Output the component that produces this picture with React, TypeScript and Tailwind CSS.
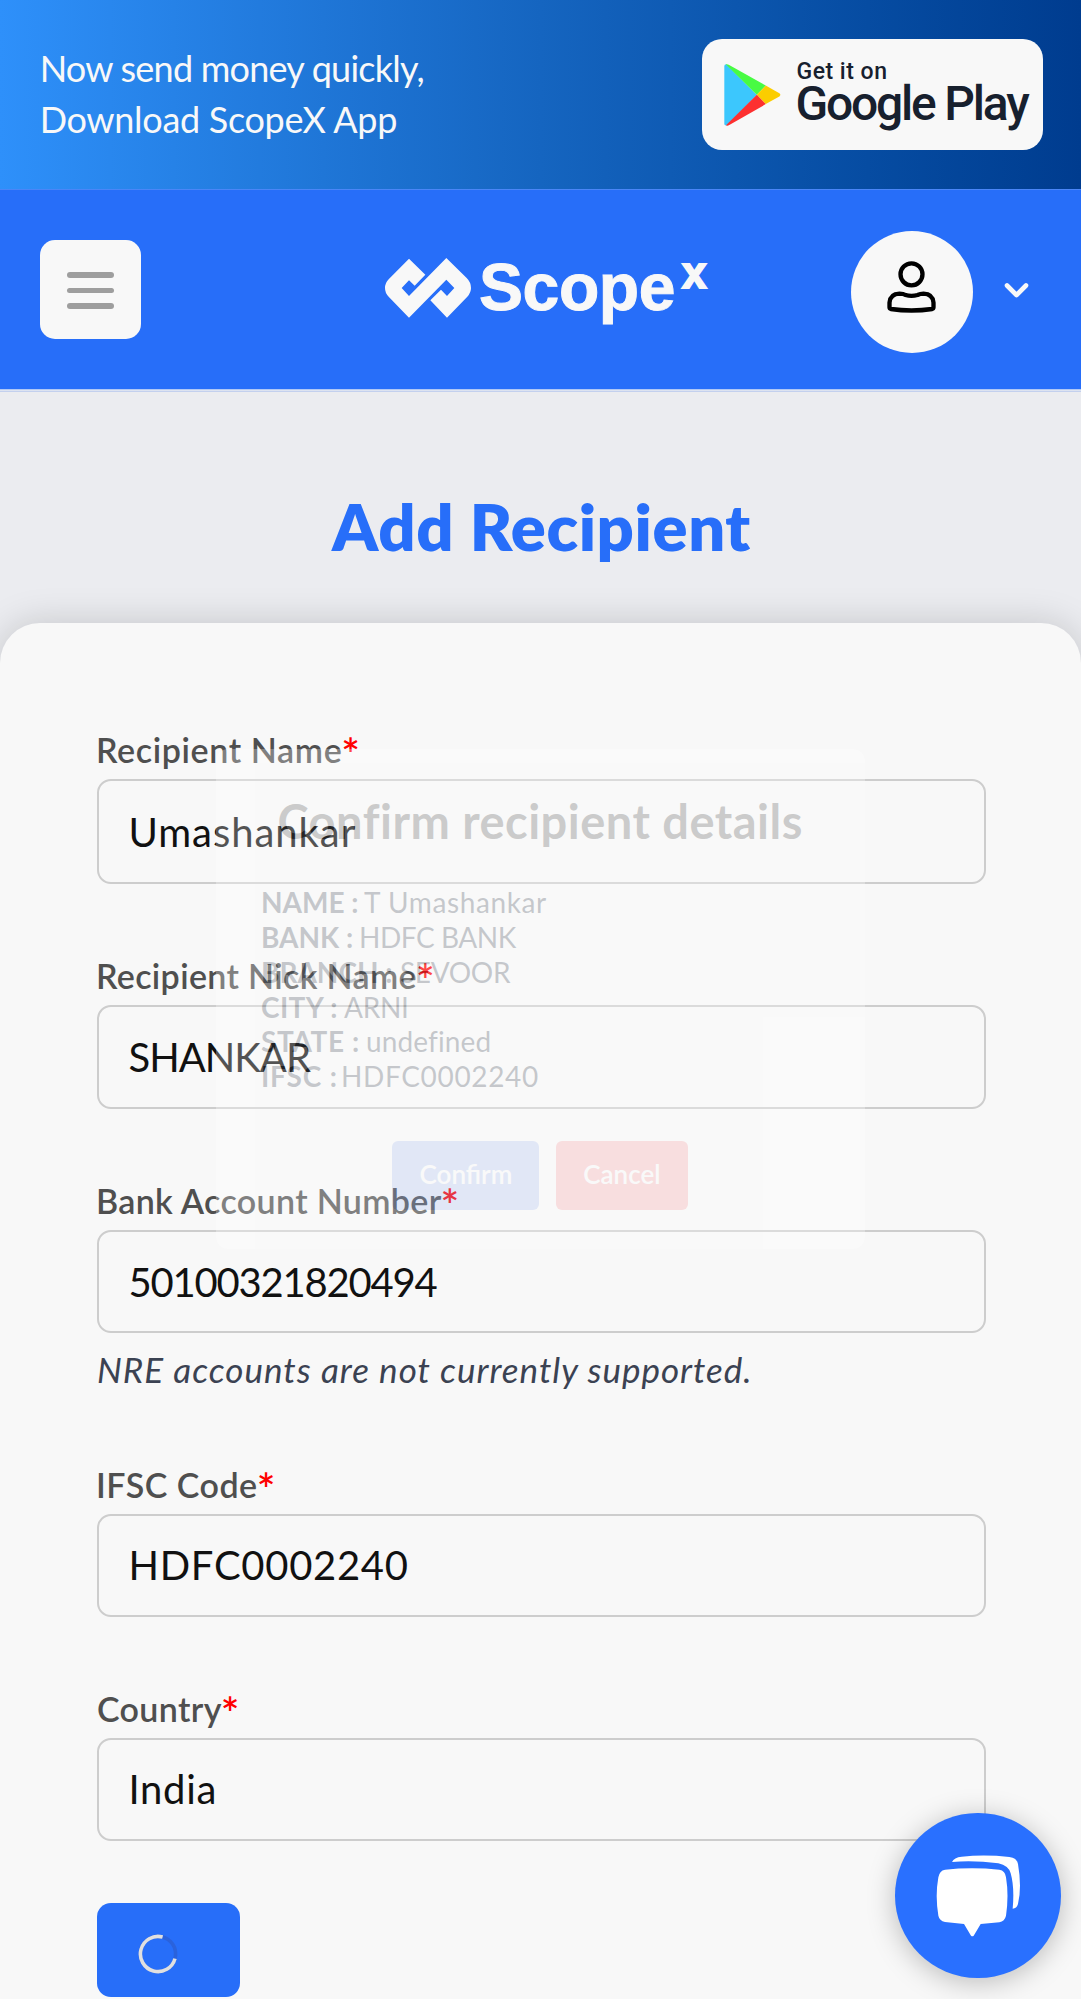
import type { ReactNode } from "react";

function PlayLogo() {
  return (
    <svg className="h-[62px] w-[57px] shrink-0" viewBox="131 130 170 187">
      <path d="M131 136 Q131 131 137 131 L229 223 L140 315 Q131 317 131 311 Z" fill="#3cc7fd" />
      <path d="M135 131 Q140 129 147 134 L256 195 L229 223 Z" fill="#48fb43" />
      <path d="M256 195 L297 218 Q303 223 297 228 L256 251 L229 223 Z" fill="#fbcd00" />
      <path d="M229 223 L256 251 L146 314 Q140 318 136 315 Z" fill="#fd3030" />
    </svg>
  );
}

function LogoMark() {
  return (
    <svg className="mt-[68px] h-[60px] w-[86px] shrink-0" viewBox="45 112 258 180" fill="#f8f8f8">
      <path d="M117 114 L166 162 L134 195 L117 179 L95 202 L117 226 L229 112 L290 172 Q303 185 303 202 Q303 216 292 228 L231 291 L181 239 L213 207 L231 226 L253 202 L229 177 L117 291 L56 228 Q45 217 45 202 Q45 187 56 176 Z" />
    </svg>
  );
}

function PersonIcon() {
  return (
    <svg className="mt-[29px] h-[55px] w-[51px]" viewBox="259.5 180 153 165" fill="none" stroke="#000" strokeWidth="13" strokeLinejoin="round">
      <circle cx="336" cy="223" r="33" />
      <path d="M270 322 V308 Q272 282 300 281 Q312 281 318 285 Q336 290 354 285 Q362 281 372 281 Q400 282 402 308 V322 Q402 326 398 327 Q336 336 274 327 Q270 326 270 322 Z" />
    </svg>
  );
}

function Spinner() {
  return (
    <svg className="h-10 w-10" viewBox="-20 -20 40 40" fill="none" strokeWidth="3.6">
      <circle r="17.6" stroke="#2a62dc" />
      <path d="M17 4.6 A17.6 17.6 0 1 1 4.6 -17" stroke="#e0e0e0" />
    </svg>
  );
}

function ChatIcon() {
  return (
    <svg className="h-[83.3px] w-[86.7px]" viewBox="225 220 260 250" fill="#fff">
      <path d="M255 267 Q336 258 418 267 Q436 270 438 290 Q447 345 438 405 Q434 422 418 425 L362 430 L341 465 Q337 469 333 465 L312 430 L255 424 Q238 420 235 405 Q225 345 235 290 Q238 270 255 267 Z" />
      <path d="M276 244 Q282 230 305 228 Q375 221 448 229 Q470 231 474 250 Q486 320 474 370 Q470 384 458 384 Q464 320 452 278 Q446 255 415 248 Q340 238 276 244 Z" />
    </svg>
  );
}

function Field({
  label,
  labelClass,
  value,
  inputClass,
  children,
}: {
  label: string;
  labelClass: string;
  value: string;
  inputClass: string;
  children?: ReactNode;
}) {
  return (
    <div>
      <label className={"block h-[51px] pl-px text-[34px] leading-[44px] font-semibold text-[#4f4f4f] " + labelClass}>
        {label}
        <span className="-ml-px align-[-8px] text-[44px] leading-[0] font-semibold tracking-normal text-[#ff0000]">*</span>
      </label>
      <div className={"flex items-center rounded-[14px] border-2 border-[#cdcdcd] pl-[29.5px] text-[40px] text-[#111] " + inputClass}>
        {value}
      </div>
      {children}
    </div>
  );
}

const details = [
  { label: "NAME :", labelClass: "w-[103px]", value: "T Umashankar", valueClass: "tracking-[0.6px]" },
  { label: "BANK :", labelClass: "w-[98px]", value: "HDFC BANK", valueClass: "tracking-[-0.45px]" },
  { label: "BRANCH :", labelClass: "w-[139px]", value: "SEVOOR", valueClass: "tracking-[-0.32px]" },
  { label: "CITY :", labelClass: "w-[83px] tracking-[0.39px]", value: "ARNI", valueClass: "tracking-[-0.29px]" },
  { label: "STATE :", labelClass: "w-[105px] tracking-[0.61px]", value: "undefined", valueClass: "tracking-[0.13px]" },
  { label: "IFSC :", labelClass: "w-[80px] tracking-[0.82px]", value: "HDFC0002240", valueClass: "tracking-[0.65px]" },
];

function ConfirmDialog() {
  return (
    <div className="absolute top-[748.6px] left-[215.7px] h-[500.7px] w-[649px] rounded-[12px] bg-white opacity-[0.28]">
      <h2 className="mt-[44.5px] text-center text-[47px] leading-[56px] font-bold tracking-[0.48px] text-[#595959]">
        Confirm recipient details
      </h2>
      <div className="mt-[36.4px] pl-[45.3px] text-[28px] leading-[34.67px] text-[#434d5b]">
        {details.map((d) => (
          <div key={d.label} className="flex whitespace-nowrap">
            <span className={"font-bold " + d.labelClass}>{d.label}</span>
            <span className={d.valueClass}>{d.value}</span>
          </div>
        ))}
      </div>
      <div className="mt-[47.4px] flex justify-center gap-[16.5px] text-[26px] font-semibold text-white">
        <button className="h-[69.5px] w-[147px] rounded-[6px] bg-[#a9bff1] pb-[2px]">Confirm</button>
        <button className="h-[69.5px] w-[132px] rounded-[6px] bg-[#f89ea2] pb-[2px]">Cancel</button>
      </div>
    </div>
  );
}

export default function App() {
  return (
    <div className="relative h-[1999px] w-[1081px] overflow-hidden bg-[#ebecf0] font-['Lato',sans-serif]">
      <div className="flex h-[189px] items-start justify-between bg-linear-to-r from-[#2e90fa] via-[#1565c0] to-[#003c8f] pr-[38.5px] pl-[39.7px]">
        <div className="pt-[43px] text-[36px] leading-[51px] text-[#f8f8f8]">
          <div className="tracking-[-0.76px]">Now send money quickly,</div>
          <div className="tracking-[-0.3px]">Download ScopeX App</div>
        </div>
        <div className="mt-[39px] flex h-[110.5px] w-[341px] rounded-[20px] bg-[#f8f8f8] pt-[24.5px] pl-[22px]">
          <PlayLogo />
          <div className="-mt-[4.5px] ml-[15px] font-['Roboto',sans-serif] font-medium whitespace-nowrap text-[#17202e]">
            <div className="pl-px text-[23px] leading-[26px] tracking-[0.5px]">Get it on</div>
            <div className="text-[48px] leading-[38px] tracking-[-2.2px]">Google Play</div>
          </div>
        </div>
      </div>

      <header className="flex h-[200px] items-start border-t border-[#4a86f8] bg-[#276ef9]">
        <button className="mt-[49.5px] ml-[39.5px] flex h-[99px] w-[101.5px] shrink-0 flex-col items-center justify-center gap-[10px] rounded-[15px] bg-[#f8f8f8] pt-[3px]">
          <span className="h-[5.4px] w-[46.5px] rounded-full bg-[#9e9e9e]" />
          <span className="h-[5.4px] w-[46.5px] rounded-full bg-[#9e9e9e]" />
          <span className="h-[5.4px] w-[46.5px] rounded-full bg-[#9e9e9e]" />
        </button>
        <div className="ml-[244px] flex w-[466px] shrink-0 items-start font-['Liberation_Sans',Arial,sans-serif] font-bold text-[#f8f8f8]">
          <LogoMark />
          <span className="mt-[63.5px] ml-2 text-[66px] leading-none tracking-[-0.4px] [-webkit-text-stroke:1px_#f8f8f8]">Scope</span>
          <span className="mt-[60.5px] ml-[7px] text-[44px] leading-none [-webkit-text-stroke:2px_#f8f8f8]">x</span>
        </div>
        <div className="mt-[41px] flex h-[121.5px] w-[121.5px] shrink-0 justify-center rounded-full bg-[#f8f8f8]">
          <PersonIcon />
        </div>
        <svg className="mt-[90px] ml-[29.5px] h-[20px] w-[29px]" viewBox="0 0 29 20" fill="none" stroke="#f8f8f8" strokeWidth="4.6" strokeLinecap="round" strokeLinejoin="round">
          <path d="M5 5.5 L14.5 15 L24 5.5" />
        </svg>
      </header>
      <div className="h-[3px] border-t border-b border-t-[#b0c8f6] border-b-[#c3d0ee] bg-[#dde3f0]" />

      <h1 className="mt-[93.5px] pl-[2px] text-center text-[65px] leading-[80px] font-extrabold tracking-[0.6px] text-[#276ef9]">Add Recipient</h1>

      <main className="mt-[57px] h-[1400px] rounded-t-[40px] bg-[#f8f8f8] pt-[105.5px] pr-[95px] pl-[97px] shadow-[0_0_36px_rgba(0,0,0,0.17)]">
        <div className="flex flex-col gap-[70px]">
          <Field label="Recipient Name" labelClass="-ml-[2px] tracking-[0.62px]" value="Umashankar" inputClass="h-[105px] tracking-[0.95px]" />
          <Field label="Recipient Nick Name" labelClass="-ml-[2px] tracking-[0.34px]" value="SHANKAR" inputClass="h-[104px] tracking-[-1px]" />
          <Field label="Bank Account Number" labelClass="-ml-[2px] tracking-[0.34px]" value="50100321820494" inputClass="h-[103px] tracking-[-1.2px]">
            <p className="mt-[11.5px] text-[35px] leading-[48px] tracking-[1px] whitespace-nowrap text-[#3b4252] italic">
              NRE accounts are not currently supported.
            </p>
          </Field>
          <Field label="IFSC Code" labelClass="-ml-[2px] tracking-[0.5px]" value="HDFC0002240" inputClass="h-[103px] tracking-[0.7px]" />
          <Field label="Country" labelClass="-ml-[1px] tracking-[0.35px]" value="India" inputClass="h-[103px] tracking-[0.7px]" />
        </div>
        <button className="mt-[62.5px] flex h-[94px] w-[143px] items-center rounded-[14px] bg-[#276ef9] pt-[7px] pl-[40.5px]">
          <Spinner />
        </button>
      </main>

      <ConfirmDialog />

      <button className="absolute top-[1812.5px] left-[895px] flex h-[165.5px] w-[165.5px] items-center rounded-full bg-[#2970ff] pl-[40px] shadow-[0_4px_28px_rgba(0,0,0,0.25)]">
        <ChatIcon />
      </button>
    </div>
  );
}
